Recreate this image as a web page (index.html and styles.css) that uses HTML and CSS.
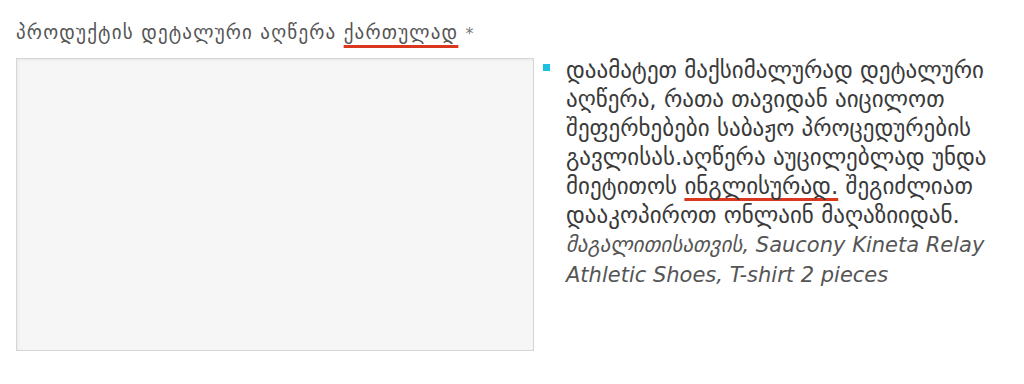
FILE: index.html
```html
<!DOCTYPE html>
<html lang="ka">
<head>
    <meta charset="UTF-8">
    <meta name="viewport" content="width=device-width, initial-scale=1.0">
    <title>პროდუქტის აღწერა</title>
    <link rel="stylesheet" href="styles.css">
</head>
<body>
    <div class="container">
        <div class="form-group">
            <label for="descKa">პროდუქტის დეტალური აღწერა <span class="mark">ქართულად</span> <span class="req">*</span></label>
            <textarea id="descKa"></textarea>
        </div>

        <ul class="hints">
            <li>დაამატეთ მაქსიმალურად დეტალური აღწერა, რათა თავიდან აიცილოთ შეფერხებები საბაჟო პროცედურების გავლისას.აღწერა აუცილებლად უნდა მიეტითოს <span class="mark">ინგლისურად.</span> შეგიძლიათ დააკოპიროთ ონლაინ მაღაზიიდან. <em>მაგალითისათვის, Saucony Kineta Relay Athletic Shoes, T-shirt 2 pieces</em></li>
        </ul>
    </div>
</body>
</html>
```

FILE: styles.css
```css
* {
    margin: 0;
    padding: 0;
    box-sizing: border-box;
    font-family: "DejaVu Sans", "Noto Sans", sans-serif;
}

body {
    background-color: white;
}

.container {
    display: flex;
    padding: 16px 16px 0 16px;
}

.form-group {
    width: 518px;
    flex-shrink: 0;
}

label {
    display: block;
    height: 42px;
    padding-top: 2px;
    font-size: 19px;
    line-height: 28px;
    letter-spacing: 1.2px;
    color: #555;
}

.mark {
    text-decoration: underline;
    text-decoration-color: #d9381e;
    text-decoration-thickness: 3px;
    text-underline-offset: 6px;
    text-decoration-skip-ink: none;
}

.req {
    color: #777;
    font-size: 16px;
}

textarea {
    display: block;
    width: 100%;
    height: 293px;
    border: 1px solid #d6d6d6;
    background-color: #f6f6f6;
    box-shadow: inset 1px 1px 3px rgba(0, 0, 0, 0.06);
    resize: none;
}

.hints {
    list-style: none;
    padding-top: 40px;
    width: 470px;
}

.hints li {
    position: relative;
    padding-left: 32px;
    font-size: 23px;
    line-height: 29px;
    color: #3a3a3a;
}

.hints li::before {
    content: "";
    position: absolute;
    left: 9px;
    top: 8px;
    width: 7px;
    height: 7px;
    background-color: #1ec0e1;
}

.hints .mark {
    text-underline-offset: 4px;
}

.hints em {
    color: #555;
    font-size: 21px;
}
```
